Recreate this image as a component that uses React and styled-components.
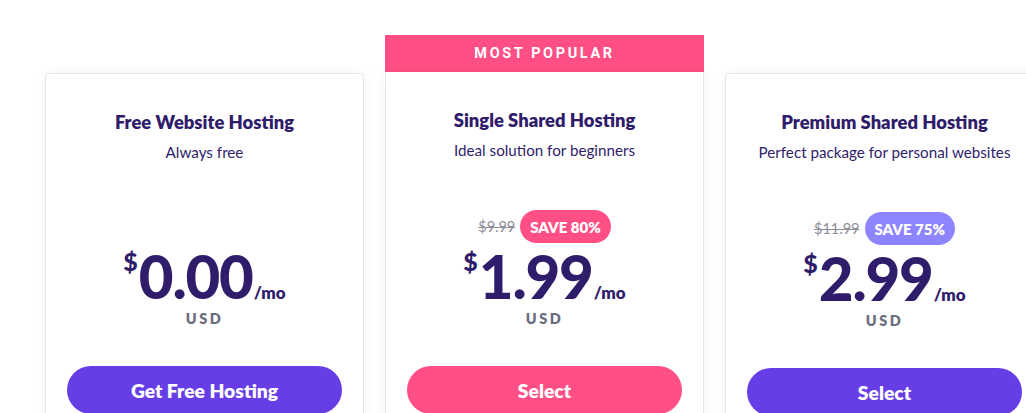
import React from "react";
import styled, { createGlobalStyle } from "styled-components";

const GlobalStyle = createGlobalStyle`
  html, body { margin: 0; padding: 0; background: #ffffff; overflow: hidden; }
  body { font-family: Lato, "Noto Sans", sans-serif; color: #2f1c6a; }
`;

const Page = styled.div`
  display: flex;
  align-items: flex-start;
  gap: 21px;
  padding: 35px 0 0 45px;
  width: max-content;
`;

const Column = styled.div`
  width: 319px;
  display: flex;
  flex-direction: column;
`;

const Banner = styled.div`
  height: 37px;
  background: #ff4f84;
  color: #ffffff;
  font-family: Roboto, "Noto Sans", sans-serif;
  font-weight: 700;
  font-size: 14.5px;
  letter-spacing: 2.6px;
  display: flex;
  align-items: center;
  justify-content: center;
`;

const Spacer = styled.div`
  height: 38px;
`;

const Card = styled.div`
  background: #ffffff;
  border: 1px solid #e4e4ea;
  border-top-width: ${(p) => (p.$popular ? 0 : 1)}px;
  border-radius: ${(p) => (p.$popular ? "0 0 4px 4px" : "4px")};
  box-shadow: 0 0 12px rgba(0, 0, 0, 0.05);
  height: 400px;
  display: flex;
  flex-direction: column;
  align-items: center;
  padding: 36px 22px 0;
  box-sizing: border-box;
`;

const Title = styled.h3`
  margin: 0;
  font-size: 18.4px;
  line-height: 24px;
  font-weight: 800;
  color: #2f1c6a;
`;

const Subtitle = styled.p`
  margin: 8px 0 0;
  font-size: 15.2px;
  line-height: 20px;
  color: #2f1c6a;
`;

const SaveRow = styled.div`
  margin-top: 50px;
  height: 33px;
  display: flex;
  align-items: center;
  gap: 5px;
`;

const OldPrice = styled.span`
  font-size: 14.5px;
  color: #8e8e99;
  text-decoration: line-through;
`;

const Badge = styled.span`
  height: 33px;
  padding: 0 10px;
  border-radius: 17px;
  background: ${(p) => p.$color};
  color: #ffffff;
  font-weight: 800;
  font-size: 15px;
  display: flex;
  align-items: center;
`;

const PriceRow = styled.div`
  margin-top: ${(p) => p.$offset}px;
  display: flex;
  align-items: baseline;
  color: #2f1c6a;
  font-weight: 900;
`;

const Currency = styled.span`
  align-self: flex-start;
  font-size: 25px;
  line-height: 25px;
  margin-top: 3px;
  margin-right: 1px;
`;

const Amount = styled.span`
  font-size: 60px;
  line-height: 60px;
  letter-spacing: -1.2px;
`;

const PerMonth = styled.span`
  font-size: 17px;
  font-weight: 800;
  line-height: 17px;
  margin-left: 1px;
`;

const CurrencyCode = styled.div`
  margin-top: 4px;
  font-size: 14.5px;
  font-weight: 800;
  letter-spacing: 2.5px;
  color: #6d6e80;
`;

const Button = styled.button`
  margin-top: 39px;
  width: 275px;
  height: 48px;
  border: none;
  border-radius: 24px;
  background: ${(p) => p.$color};
  color: #ffffff;
  font-family: Lato, "Noto Sans", sans-serif;
  font-weight: 800;
  font-size: 19.3px;
  cursor: pointer;
`;

const plans = [
  {
    title: "Free Website Hosting",
    subtitle: "Always free",
    amount: "0.00",
    button: "Get Free Hosting",
    buttonColor: "#673de6",
    offset: 1,
  },
  {
    title: "Single Shared Hosting",
    subtitle: "Ideal solution for beginners",
    old: "$9.99",
    save: "SAVE 80%",
    badgeColor: "#ff4f84",
    amount: "1.99",
    button: "Select",
    buttonColor: "#ff4f84",
    popular: true,
    offset: 3,
  },
  {
    title: "Premium Shared Hosting",
    subtitle: "Perfect package for personal websites",
    old: "$11.99",
    save: "SAVE 75%",
    badgeColor: "#8c85ff",
    amount: "2.99",
    button: "Select",
    buttonColor: "#673de6",
    offset: 3,
  },
];

export default function App() {
  return (
    <>
      <GlobalStyle />
      <Page>
        {plans.map((p) => (
          <Column key={p.title}>
            {p.popular ? <Banner>MOST POPULAR</Banner> : <Spacer />}
            <Card $popular={p.popular}>
              <Title>{p.title}</Title>
              <Subtitle>{p.subtitle}</Subtitle>
              {p.save ? (
                <SaveRow>
                  <OldPrice>{p.old}</OldPrice>
                  <Badge $color={p.badgeColor}>{p.save}</Badge>
                </SaveRow>
              ) : (
                <SaveRow />
              )}
              <PriceRow $offset={p.offset}>
                <Currency>$</Currency>
                <Amount>{p.amount}</Amount>
                <PerMonth>/mo</PerMonth>
              </PriceRow>
              <CurrencyCode>USD</CurrencyCode>
              <Button $color={p.buttonColor}>{p.button}</Button>
            </Card>
          </Column>
        ))}
      </Page>
    </>
  );
}
